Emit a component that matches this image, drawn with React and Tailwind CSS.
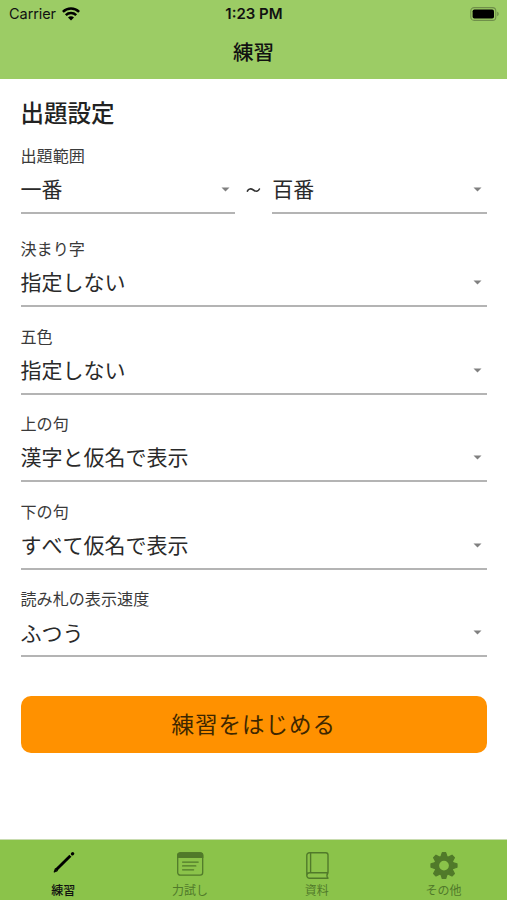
const tabs = [
  { label: '練習', icon: PencilIcon, active: true },
  { label: '力試し', icon: ListBoxIcon },
  { label: '資料', icon: BookIcon },
  { label: 'その他', icon: GearIcon },
]

const fields = [
  { label: '決まり字', value: '指定しない' },
  { label: '五色', value: '指定しない' },
  { label: '上の句', value: '漢字と仮名で表示' },
  { label: '下の句', value: 'すべて仮名で表示' },
  { label: '読み札の表示速度', value: 'ふつう' },
]

function WifiIcon() {
  return (
    <svg width="18" height="14" viewBox="0 0 18 14" fill="none" stroke="#000" strokeWidth="2.5">
      <path d="M0.9 4.9a11.6 11.6 0 0 1 16.2 0" />
      <path d="M3.8 8.2a7.4 7.4 0 0 1 10.4 0" />
      <path d="M9 13.6 6 10.4a4.2 4.2 0 0 1 6 0z" fill="#000" stroke="none" />
    </svg>
  )
}

function BatteryIcon() {
  return (
    <svg width="30" height="14" viewBox="0 0 30 14">
      <rect x="0.8" y="0.6" width="25" height="12.8" rx="3.4" fill="none" stroke="#6f8f4a" strokeWidth="1.1" />
      <rect x="2.6" y="2.4" width="21.4" height="9.2" rx="1.8" fill="#000" />
      <path d="M27.2 4.8c2 .6 2 3.8 0 4.4z" fill="#6f8f4a" />
    </svg>
  )
}

function PencilIcon() {
  return (
    <svg width="28" height="28" viewBox="0 0 28 28" fill="none" stroke="#000" strokeLinecap="round">
      <path d="M21.4 4.8 7.2 18.8" strokeWidth="2.9" strokeLinecap="butt" />
      <path d="M6.2 17.8 5 21.2 8.3 19.9z" fill="#000" strokeWidth="0.8" strokeLinejoin="round" />
      <path d="M23.4 2.9 23.7 2.6" strokeWidth="3.2" />
    </svg>
  )
}

function ListBoxIcon() {
  return (
    <svg width="28" height="28" viewBox="0 0 28 28" fill="none" stroke="currentColor" strokeWidth="1.3">
      <rect x="1.7" y="1.8" width="25" height="22.4" rx="2.6" />
      <path d="M1.7 6.4V4.4a2.6 2.6 0 0 1 2.6-2.6h19.8a2.6 2.6 0 0 1 2.6 2.6v2z" fill="currentColor" />
      <path d="M6.6 11.1h15.6M6.6 14.9h13.2M6.6 18.8h11" strokeLinecap="round" />
    </svg>
  )
}

function BookIcon() {
  return (
    <svg width="28" height="28" viewBox="0 0 28 28" fill="none" stroke="currentColor" strokeWidth="1.4" strokeLinejoin="round">
      <path d="M25 21.8V3.9a2.2 2.2 0 0 0-2.2-2.2H6.4a2.6 2.6 0 0 0-2.6 2.6v20.2a2.8 2.8 0 0 0 2.8 2.8H25c-1.3-1.7-1.3-3.8 0-5.5H6.6a2.8 2.8 0 0 0-2.8 2.7" />
      <path d="M7.6 1.7v20.1" />
    </svg>
  )
}

const teeth = [0, 45, 90, 135, 180, 225, 270, 315]

function GearIcon() {
  return (
    <svg width="28" height="28" viewBox="0 0 28 28" fill="currentColor" stroke="currentColor">
      <circle cx="14" cy="14.6" r="7.4" fill="none" strokeWidth="5" />
      {teeth.map((angle) => (
        <path
          key={angle}
          d="M10.9 6 12.3 1.6h3.4L17.1 6z"
          strokeWidth="1.2"
          strokeLinejoin="round"
          transform={`rotate(${angle} 14 14.6)`}
        />
      ))}
    </svg>
  )
}

function Select({ value }) {
  return (
    <button className="flex h-[47px] w-full items-center justify-between border-b-2 border-[#b4b4b4] pr-[5px] text-left text-[21px] text-[#2a2a2a]">
      <span className="-mt-px">{value}</span>
      <svg width="9" height="5" viewBox="0 0 9 5">
        <path d="M0.5 0.4h8L4.5 4.6z" fill="#808080" />
      </svg>
    </button>
  )
}

function Label({ children }) {
  return <div className="h-6 text-[16.1px] leading-6 text-[#3a3a3a]">{children}</div>
}

function App() {
  return (
    <div className="flex h-[900px] w-[507px] flex-col overflow-hidden bg-white font-['Noto_Sans_CJK_JP',sans-serif] text-[#222] [font-kerning:none]">
      {/* Status bar and title */}
      <header className="h-[79px] bg-[#9ccc65] text-[#111]">
        <div className="grid h-7 grid-cols-3 items-center pl-[9px] pr-[7px] font-[Inter,sans-serif] text-[14.5px]">
          <div className="flex items-center gap-[6px]">
            <span>Carrier</span>
            <WifiIcon />
          </div>
          <span className="pr-px text-center text-[15px] font-semibold">1:23 PM</span>
          <div className="flex justify-end">
            <BatteryIcon />
          </div>
        </div>
        <h1 className="text-center text-[20.5px] font-medium leading-[47px]">練習</h1>
      </header>

      {/* Settings */}
      <main className="flex-1 pl-[20.5px] pr-5 pt-4">
        <h2 className="h-12 text-[23.5px] font-medium leading-[34px]">出題設定</h2>

        <section className="mb-[22px]">
          <Label>出題範囲</Label>
          <div className="flex items-center">
            <div className="flex-1">
              <Select value="一番" />
            </div>
            <svg width="37" height="12" viewBox="0 0 37 12" fill="none" stroke="#333" strokeWidth="1.6" strokeLinecap="round">
              <path d="M12.4 6.2c1.2-2.6 3.400-3 6-1.200s4.800 1.600 6-1" />
            </svg>
            <div className="flex-1">
              <Select value="百番" />
            </div>
          </div>
        </section>

        <div className="flex flex-col gap-[16.6px]">
          {fields.map((field) => (
            <section key={field.label}>
              <Label>{field.label}</Label>
              <Select value={field.value} />
            </section>
          ))}
        </div>

        <button className="mt-[39px] h-[57px] w-full rounded-[10px] bg-[#ff9100] pb-[2px] text-[22.5px] tracking-[1px] text-[#3e2700]">
          練習をはじめる
        </button>
      </main>

      {/* Tabs */}
      <nav className="grid h-[61px] grid-cols-4 border-t border-[#c9dcb0] bg-[#8bc34a]">
        {tabs.map(({ label, icon: Icon, active }) => (
          <div
            key={label}
            className={`flex flex-col items-center pt-[11px] text-xs ${active ? 'font-medium text-[#111]' : 'text-[#517a2a]'}`}
          >
            <Icon />
            <span className="leading-[22px]">{label}</span>
          </div>
        ))}
      </nav>
    </div>
  )
}

export default App
